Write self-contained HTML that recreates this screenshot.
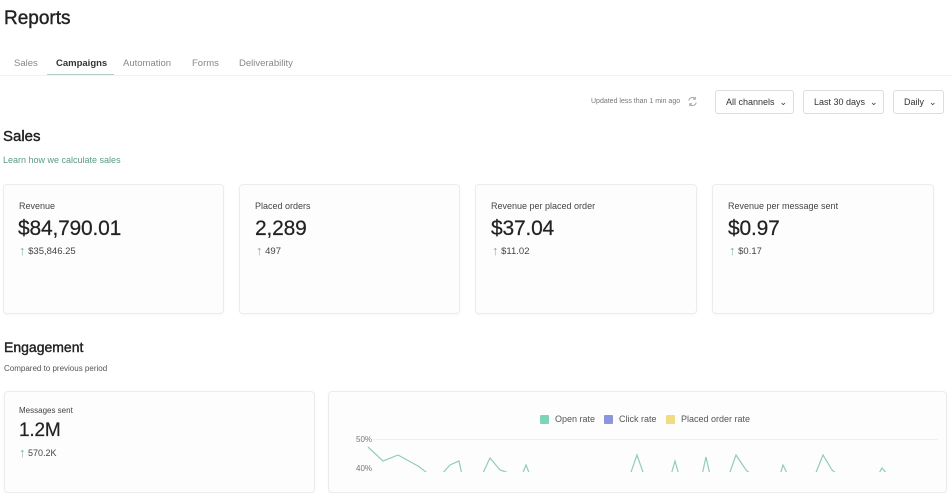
<!DOCTYPE html>
<html><head><style>
body{margin:0;width:952px;height:472px;overflow:hidden;background:#fff;font-family:"Liberation Sans",sans-serif;color:#222;position:relative}
.a{position:absolute;white-space:nowrap}
.card{position:absolute;border:1px solid #ececef;border-radius:4px;background:#fdfdfe;box-shadow:0 1px 2px rgba(0,0,0,.04)}
.lbl{font-size:9px;color:#444}
.big{font-size:21px;color:#222;letter-spacing:-0.2px;-webkit-text-stroke:0.2px #222}
.sub{font-size:9.5px;color:#444}
.arr{color:#7bb3a0;font-size:13px;position:relative;top:1px}
.btn{position:absolute;top:90px;height:24px;border:1px solid #ddd;border-radius:3px;font-size:9px;color:#333;box-sizing:border-box;line-height:22px;padding-left:10px}
.h{-webkit-text-stroke:0.4px #222;color:#222}
</style></head><body>
<div class="a h" style="left:4px;top:8px;font-size:19px">Reports</div>
<div class="a" style="left:14px;top:58px;font-size:9.5px;color:#888">Sales</div>
<div class="a" style="left:56px;top:58px;font-size:9.5px;color:#333;font-weight:bold">Campaigns</div>
<div class="a" style="left:47px;top:74px;width:67px;height:2px;background:#b5ccc4"></div>
<div class="a" style="left:123px;top:58px;font-size:9.5px;color:#888">Automation</div>
<div class="a" style="left:192px;top:58px;font-size:9.5px;color:#888">Forms</div>
<div class="a" style="left:239px;top:58px;font-size:9.5px;color:#888">Deliverability</div>
<div class="a" style="left:0;top:75px;width:952px;height:1px;background:#f3f3f3"></div>
<div class="a" style="left:591px;top:98px;font-size:7px;color:#777">Updated less than 1 min ago</div>
<svg class="a" style="left:687px;top:96px" width="11" height="11" viewBox="0 0 12 12"><path d="M2 5a4 4 0 0 1 7-2M10 7a4 4 0 0 1-7 2" fill="none" stroke="#aaa" stroke-width="1.2"/><path d="M9 1v2.5H6.5M3 11V8.5h2.5" fill="none" stroke="#aaa" stroke-width="1.2"/></svg>
<div class="btn" style="left:715px;width:79px">All channels &nbsp;⌄</div>
<div class="btn" style="left:803px;width:81px">Last 30 days &nbsp;⌄</div>
<div class="btn" style="left:893px;width:51px">Daily &nbsp;⌄</div>
<div class="a h" style="left:3px;top:128px;font-size:15px">Sales</div>
<div class="a" style="left:3px;top:155px;font-size:9px;color:#5b9b86">Learn how we calculate sales</div>

<div class="card" style="left:3px;top:184px;width:219px;height:128px"></div>
<div class="card" style="left:239px;top:184px;width:219px;height:128px"></div>
<div class="card" style="left:475px;top:184px;width:220px;height:128px"></div>
<div class="card" style="left:712px;top:184px;width:220px;height:128px"></div>

<div class="a lbl" style="left:19px;top:201px">Revenue</div>
<div class="a big" style="left:18px;top:217px">$84,790.01</div>
<div class="a sub" style="left:19px;top:242px"><span class="arr">↑</span> $35,846.25</div>
<div class="a lbl" style="left:255px;top:201px">Placed orders</div>
<div class="a big" style="left:255px;top:217px">2,289</div>
<div class="a sub" style="left:256px;top:242px"><span class="arr">↑</span> 497</div>
<div class="a lbl" style="left:491px;top:201px">Revenue per placed order</div>
<div class="a big" style="left:491px;top:217px">$37.04</div>
<div class="a sub" style="left:492px;top:242px"><span class="arr">↑</span> $11.02</div>
<div class="a lbl" style="left:728px;top:201px">Revenue per message sent</div>
<div class="a big" style="left:728px;top:217px">$0.97</div>
<div class="a sub" style="left:729px;top:242px"><span class="arr">↑</span> $0.17</div>

<div class="a h" style="left:4px;top:339px;font-size:14px">Engagement</div>
<div class="a" style="left:4px;top:364px;font-size:8px;color:#555">Compared to previous period</div>
<div class="card" style="left:4px;top:391px;width:309px;height:100px"></div>
<div class="a lbl" style="left:19px;top:406px;font-size:8px">Messages sent</div>
<div class="a big" style="left:19px;top:420px;font-size:19px">1.2M</div>
<div class="a sub" style="left:19px;top:444px;font-size:9px"><span class="arr">↑</span> 570.2K</div>
<div class="card" style="left:328px;top:391px;width:617px;height:100px"></div>
<div class="a" style="left:540px;top:415px;width:9px;height:9px;background:#7fd3b8;border-radius:1px"></div>
<div class="a" style="left:555px;top:414px;font-size:9px;color:#555">Open rate</div>
<div class="a" style="left:604px;top:415px;width:9px;height:9px;background:#8c95dd;border-radius:1px"></div>
<div class="a" style="left:619px;top:414px;font-size:9px;color:#555">Click rate</div>
<div class="a" style="left:666px;top:415px;width:9px;height:9px;background:#f0dc82;border-radius:1px"></div>
<div class="a" style="left:681px;top:414px;font-size:9px;color:#555">Placed order rate</div>
<div class="a" style="left:356px;top:435px;font-size:8px;color:#777">50%</div>
<div class="a" style="left:356px;top:464px;font-size:8px;color:#777">40%</div>
<div class="a" style="left:373px;top:439px;width:565px;height:1px;background:#f0f0f0"></div>
<svg class="a" style="left:0;top:0" width="952" height="472"><polyline fill="none" stroke="#8fcdb8" stroke-width="1.2" points="368,447 383,461 398,455 418,466 430,475 441,475 450,465 459,461 462,475"/><polyline fill="none" stroke="#8fcdb8" stroke-width="1.2" points="482,475 490,458 500,470 515,475"/><polyline fill="none" stroke="#8fcdb8" stroke-width="1.2" points="522,475 526,465 530,475"/><polyline fill="none" stroke="#8fcdb8" stroke-width="1.2" points="630,475 637,455 644,475"/><polyline fill="none" stroke="#8fcdb8" stroke-width="1.2" points="671,475 675,461 679,475"/><polyline fill="none" stroke="#8fcdb8" stroke-width="1.2" points="702,475 706,457 710,475"/><polyline fill="none" stroke="#8fcdb8" stroke-width="1.2" points="729,475 736,455 746,470 752,475"/><polyline fill="none" stroke="#8fcdb8" stroke-width="1.2" points="780,475 783,465 788,475"/><polyline fill="none" stroke="#8fcdb8" stroke-width="1.2" points="815,475 823,455 832,470 838,475"/><polyline fill="none" stroke="#8fcdb8" stroke-width="1.2" points="878,475 882,468 888,475"/></svg>
</body></html>
